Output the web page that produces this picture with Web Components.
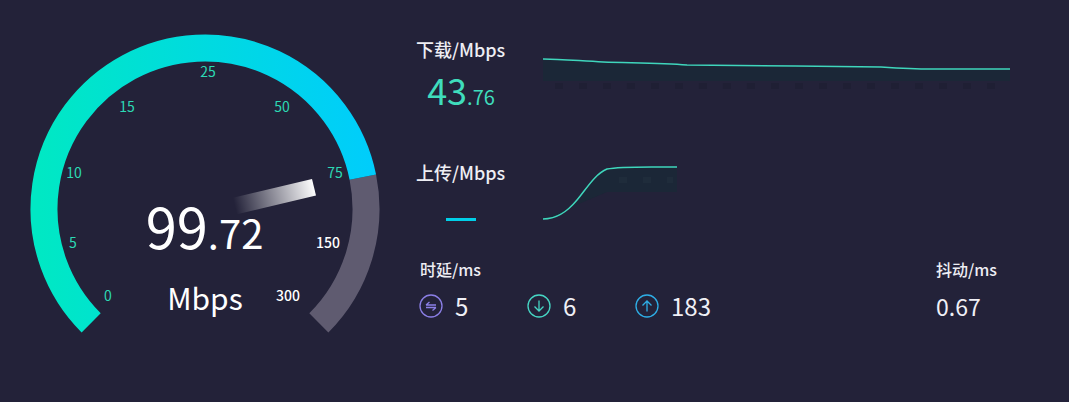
<!DOCTYPE html>
<html lang="zh">
<head>
<meta charset="utf-8">
<title>Speed test</title>
<style>
  html, body { margin: 0; height: 100%; background: #232239; }
  body { font-family: "Noto Sans CJK SC", "Noto Sans", sans-serif; color: #fff; overflow: hidden; }
  speed-app { width: 1069px; height: 402px; }
</style>
</head>
<body>
<speed-app>
  <speed-gauge slot="gauge"></speed-gauge>
  <speed-row slot="rows" label="下载/Mbps" big="43" small=".76" chart="down"></speed-row>
  <speed-row slot="rows" label="上传/Mbps" chart="up"></speed-row>
  <stat-block slot="stats" label="时延/ms" class="latency">
    <stat-item icon="swap" value="5"></stat-item>
    <stat-item icon="down" value="6"></stat-item>
    <stat-item icon="up" value="183"></stat-item>
  </stat-block>
  <stat-block slot="stats" label="抖动/ms">
    <stat-item value="0.67"></stat-item>
  </stat-block>
</speed-app>

<script>
class SpeedApp extends HTMLElement {
  constructor() {
    super();
    this.attachShadow({ mode: 'open' });
    this.shadowRoot.innerHTML = `
      <style>
        :host { display: flex; box-sizing: border-box; }
        .left { flex: 0 0 417px; }
        .right { flex: 1; display: flex; flex-direction: column; padding-right: 59px; }
        .rows { display: flex; flex-direction: column; padding-top: 37px; gap: 27px; }
        .stats { display: flex; justify-content: space-between; padding: 2px 0 0 3px; margin-right: 14px; }
      </style>
      <div class="left"><slot name="gauge"></slot></div>
      <div class="right">
        <div class="rows"><slot name="rows"></slot></div>
        <div class="stats"><slot name="stats"></slot></div>
      </div>
    `;
  }
}

class SpeedGauge extends HTMLElement {
  constructor() {
    super();
    this.attachShadow({ mode: 'open' });
    const arc = (a, b) => {
      const p = t => {
        const r = t * Math.PI / 180;
        return (205 + 161 * Math.sin(r)).toFixed(2) + ' ' + (209 - 161 * Math.cos(r)).toFixed(2);
      };
      return `M${p(a)} A161 161 0 ${b - a > 180 ? 1 : 0} 1 ${p(b)}`;
    };
    const ticks = [
      ['0', 108, 295, 1], ['5', 73, 242, 1], ['10', 74, 172, 1], ['15', 127, 106, 1], ['25', 208, 71, 1],
      ['50', 282, 106, 1], ['75', 335, 172, 1], ['150', 328, 242, 0], ['300', 288, 295, 0]
    ];
    this.shadowRoot.innerHTML = `
      <style>
        :host { display: block; width: 417px; height: 402px; }
        svg { display: block; font-family: "Noto Sans CJK SC", "Noto Sans", sans-serif; }
        .tick { font-size: 14px; text-anchor: middle; dominant-baseline: central; }
        .on { fill: #2cd9b4; }
        .off { fill: #fff; font-weight: 500; }
        .val { fill: #fff; text-anchor: middle; font-size: 56px; }
        .val tspan { font-size: 40px; }
        .unit { fill: #fff; text-anchor: middle; font-size: 30px; }
      </style>
      <svg width="417" height="402" viewBox="0 0 417 402">
        <defs>
          <linearGradient id="prog" gradientUnits="userSpaceOnUse" x1="40" y1="0" x2="370" y2="0">
            <stop offset="0" stop-color="#00e8c4"/>
            <stop offset="1" stop-color="#00cdfb"/>
          </linearGradient>
          <linearGradient id="needle" gradientUnits="userSpaceOnUse" x1="235" y1="207" x2="315" y2="188">
            <stop offset="0" stop-color="#fff" stop-opacity="0"/>
            <stop offset="1" stop-color="#fff"/>
          </linearGradient>
        </defs>
        <path d="${arc(78.6, 135)}" fill="none" stroke="#5f5b70" stroke-width="27"/>
        <path d="${arc(-135, 78.6)}" fill="none" stroke="url(#prog)" stroke-width="27"/>
        <polygon points="312,179 316,195.5 236,214.5 232,198" fill="url(#needle)"/>
        ${ticks.map(t => `<text class="tick ${t[3] ? 'on' : 'off'}" x="${t[1]}" y="${t[2]}">${t[0]}</text>`).join('')}
        <text class="val" x="204.5" y="249">99<tspan>.72</tspan></text>
        <text class="unit" x="205" y="310">Mbps</text>
      </svg>
    `;
  }
}

class SpeedRow extends HTMLElement {
  constructor() {
    super();
    this.attachShadow({ mode: 'open' });
  }
  connectedCallback() {
    const big = this.getAttribute('big');
    const small = this.getAttribute('small');
    const charts = {
      down: {
        line: 'M2 10 C 20 10 40 12 62 13 C 90 14 120 14 146 16 C 200 17 280 17 340 18 C 356 19 372 20 390 20 L 469 20',
        start: 2, bottom: 32, end: 469, top: 12, dots: '#1f1f34', dotY: 37
      },
      up: {
        line: 'M2 69 C 16 69 26 62 36 50 C 46 38 54 24 66 19 C 80 16 110 17 136 17',
        start: 66, bottom: 42, end: 136, top: -10, dots: '#1f2c3b', dotY: 30
      }
    };
    const c = charts[this.getAttribute('chart')];
    this.shadowRoot.innerHTML = `
      <style>
        :host { display: grid; grid-template-columns: 124px 1fr; height: 96px; }
        .label { font-size: 18px; line-height: 24px; color: #eeeef4; font-weight: 500; margin-left: -1px; }
        .value { text-align: center; width: 88px; color: #3fdcbc; font-size: 36px; line-height: 46px; margin-top: 5px; }
        .value small { font-size: 20px; }
        .dash { width: 30px; height: 3px; background: #00cfe8; margin: 34px 0 0 29px; }
        svg { display: block; margin-top: ${c.top}px; }
      </style>
      <div>
        <div class="label">${this.getAttribute('label')}</div>
        ${big ? `<div class="value">${big}<small>${small}</small></div>` : '<div class="dash"></div>'}
      </div>
      <svg width="470" height="80" viewBox="0 0 470 80">
        <path d="${c.line} L${c.end} ${c.bottom} L${c.start} ${c.bottom} Z" fill="#1b2737"/>
        <line x1="${c.start + 12}" x2="${c.end - 4}" y1="${c.dotY}" y2="${c.dotY}" stroke="${c.dots}" stroke-width="6" stroke-dasharray="8 16"/>
        <path d="${c.line}" fill="none" stroke="#3fd6bc" stroke-width="1.5"/>
      </svg>
    `;
  }
}

class StatBlock extends HTMLElement {
  constructor() {
    super();
    this.attachShadow({ mode: 'open' });
  }
  connectedCallback() {
    this.shadowRoot.innerHTML = `
      <style>
        :host { display: block; }
        .label { font-size: 16px; line-height: 22px; font-weight: 500; color: #eeeef4; }
        .items { display: flex; gap: 0; margin-top: 9px; }
      </style>
      <div class="label">${this.getAttribute('label')}</div>
      <div class="items"><slot></slot></div>
    `;
  }
}

class StatItem extends HTMLElement {
  constructor() {
    super();
    this.attachShadow({ mode: 'open' });
  }
  connectedCallback() {
    const icons = {
      swap: ['#8b7fe6', '<path d="M7 11 L17 11 M7 11 L10.5 8 M7 13.5 L17 13.5 M17 13.5 L13.5 16.5"/>'],
      down: ['#46d6c4', '<path d="M12 6.5 L12 17 M7.5 12.5 L12 17 L16.5 12.5"/>'],
      up: ['#2eaee6', '<path d="M12 17.5 L12 7 M7.5 11.5 L12 7 L16.5 11.5"/>']
    };
    const name = this.getAttribute('icon');
    const ic = icons[name];
    const widths = { swap: 108, down: 108 };
    this.shadowRoot.innerHTML = `
      <style>
        :host { display: flex; align-items: center; height: 34px; width: ${widths[name] ? widths[name] + 'px' : 'auto'}; gap: 12px; }
        svg { display: block; flex: none; margin-left: -1px; }
        span { font-size: ${ic ? 24 : 23}px; color: #f0f0f6; line-height: 34px; }
      </style>
      ${ic ? `<svg width="24" height="24" viewBox="0 0 24 24" fill="none" stroke="${ic[0]}" stroke-width="1.3"><circle cx="12" cy="12" r="11"/>${ic[1]}</svg>` : ''}
      <span>${this.getAttribute('value')}</span>
    `;
  }
}

customElements.define('speed-app', SpeedApp);
customElements.define('speed-gauge', SpeedGauge);
customElements.define('speed-row', SpeedRow);
customElements.define('stat-block', StatBlock);
customElements.define('stat-item', StatItem);
</script>
</body>
</html>
